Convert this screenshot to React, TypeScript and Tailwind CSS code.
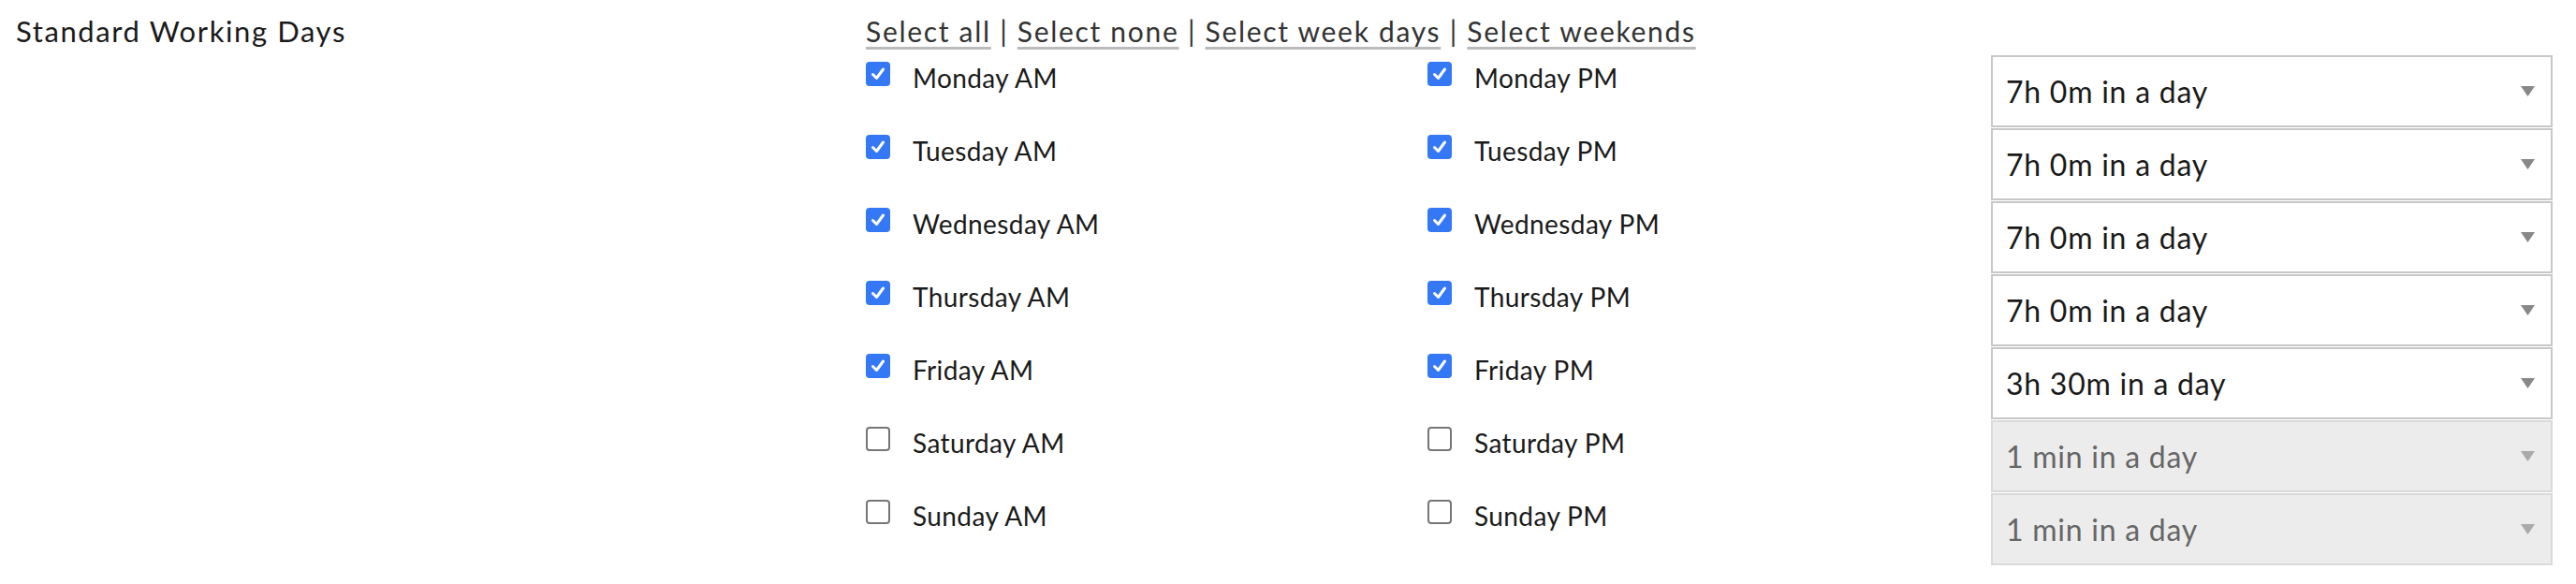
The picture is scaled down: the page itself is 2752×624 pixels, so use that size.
import React from "react";

const font = { fontFamily: "Lato, 'Noto Sans', sans-serif" };

const days = ["Monday", "Tuesday", "Wednesday", "Thursday", "Friday", "Saturday", "Sunday"];
const checked = [true, true, true, true, true, false, false];
const hours = ["7h 0m in a day", "7h 0m in a day", "7h 0m in a day", "7h 0m in a day", "3h 30m in a day", "1 min in a day", "1 min in a day"];

function Box({ on }: { on: boolean }) {
  return on ? (
    <span className="flex h-[26px] w-[26px] shrink-0 items-center justify-center rounded-[4px] bg-[#3478f6]">
      <svg width="18" height="18" viewBox="0 0 18 18">
        <path d="M3.5 9.5 L7.5 13.5 L14.5 4" fill="none" stroke="white" strokeWidth="3" strokeLinecap="round" strokeLinejoin="round" />
      </svg>
    </span>
  ) : (
    <span className="block h-[26px] w-[26px] shrink-0 rounded-[4px] border-2 border-[#767676] bg-white" />
  );
}

function Item({ label, on }: { label: string; on: boolean }) {
  return (
    <div className="flex h-[56px] w-[600px] items-center">
      <Box on={on} />
      <span className="ml-[24px] mt-[8px] text-[28px] leading-[36px] tracking-[0.4px] text-[#1a1a1a]">{label}</span>
    </div>
  );
}

export default function App() {
  const link = "underline decoration-[#bbbbbb] decoration-[3px] underline-offset-[5px]";
  return (
    <div className="flex h-[624px] w-[2752px] bg-white" style={font}>
      <div className="w-[925px] pl-[17px] pt-[15px] text-[31px] leading-[36px] tracking-[1.6px] text-[#1a1a1a]">
        Standard Working Days
      </div>
      <div className="w-[1202px]">
        <div className="pt-[15px] text-[30px] leading-[36px] tracking-[1.7px] text-[#333]">
          <span className={link}>Select all</span> | <span className={link}>Select none</span> |{" "}
          <span className={link}>Select week days</span> | <span className={link}>Select weekends</span>
        </div>
        <div className="flex flex-col gap-[22px]">
          {days.map((d, i) => (
            <div key={d} className="flex">
              <Item label={`${d} AM`} on={checked[i]} />
              <Item label={`${d} PM`} on={checked[i]} />
            </div>
          ))}
        </div>
      </div>
      <div className="flex w-[600px] flex-col gap-[1px] pt-[59px]">
        {hours.map((h, i) => {
          const dis = i >= 5;
          return (
            <div
              key={i}
              className={
                dis
                  ? "flex h-[77px] items-center justify-between border-2 border-[#dadada] bg-[#ececec] pl-[14px] pr-[17px] text-[32px] text-[#666]"
                  : "flex h-[77px] items-center justify-between border-2 border-[#c8c8c8] bg-white pl-[14px] pr-[17px] text-[32px] text-[#1a1a1a]"
              }
            >
              <span className="leading-[40px] tracking-[0.75px]">{h}</span>
              <svg width="15" height="11" viewBox="0 0 15 11">
                <path d="M0 0 H15 L7.5 11 Z" fill={dis ? "#aaaaaa" : "#888888"} />
              </svg>
            </div>
          );
        })}
      </div>
    </div>
  );
}
